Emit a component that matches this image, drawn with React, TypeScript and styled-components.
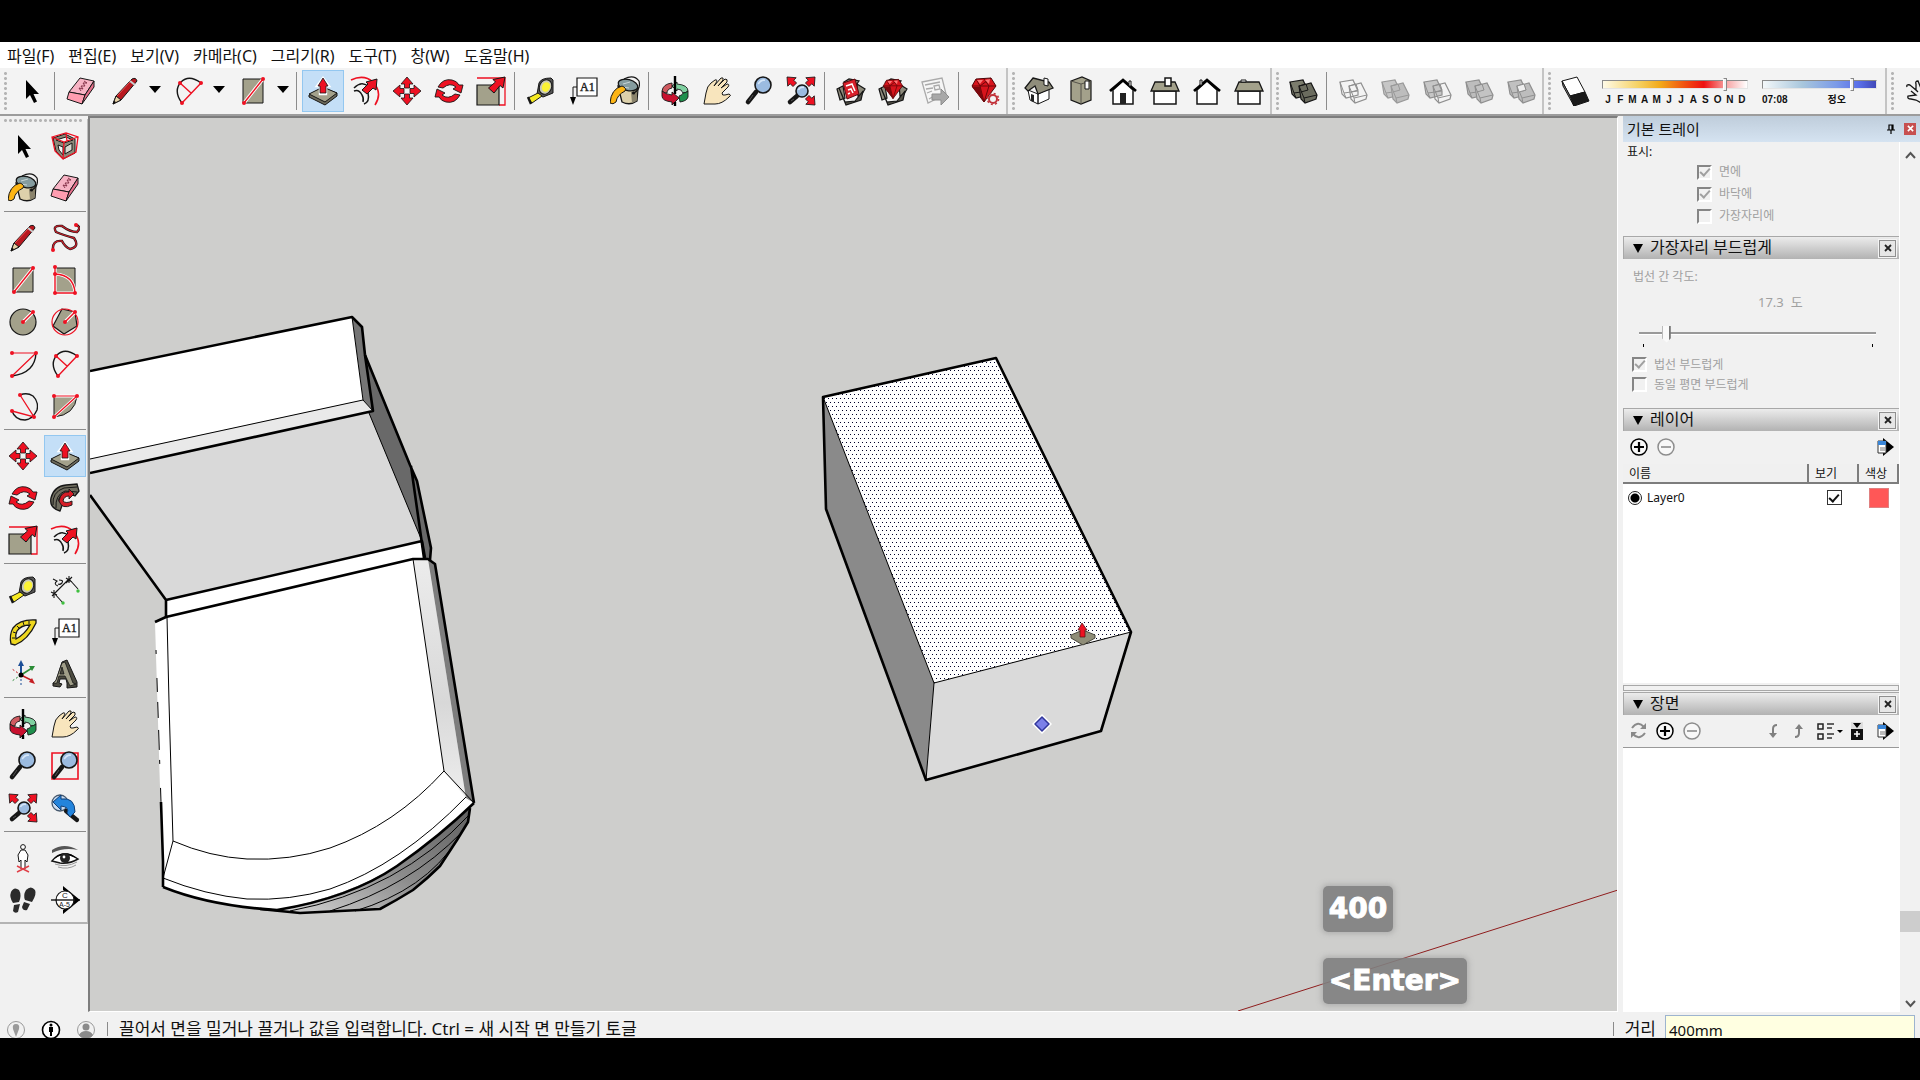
import React from "react";
import styled, { createGlobalStyle, css } from "styled-components";

const FONT = '"Noto Sans", "Noto Sans CJK KR", sans-serif';
const INK = "#161616";
const RED = "#ee1122";
const STONE = "#a3a18b";

const GlobalStyle = createGlobalStyle`
  * { box-sizing: border-box; }
  body { margin: 0; background: #000; font-family: ${FONT}; color: #111; }
  button, input, table { font-family: inherit; color: inherit; }
`;

/* ---------- icon artwork, each drawn on a 30 x 30 grid ---------- */

const arrowHead = (x: number, y: number, deg: number, fill = RED) => (
  <path
    key={`${x}-${y}`}
    transform={`translate(${x} ${y}) rotate(${deg})`}
    d="M0 0L6 7H2.500V11H-2.500V7H-6Z"
    fill={fill}
    stroke={INK}
    strokeWidth="0.8"
  />
);

const lens = (cx: number, cy: number, r: number) => (
  <>
    <path d={`M${cx - r + 1} ${cy + r - 1}L4 26`} stroke={INK} strokeWidth="4.6" strokeLinecap="round" />
    <path d={`M${cx - r - 2} ${cy + r + 2}L5 25`} stroke="#555" strokeWidth="1" />
    <circle cx={cx} cy={cy} r={r} fill="#9bbbe0" stroke={INK} strokeWidth="1.6" />
    <path d={`M${cx - r * 0.6} ${cy - 1}Q${cx - 2} ${cy - r * 0.7} ${cx + 2} ${cy - r * 0.6}`} stroke="#d5e6f8" strokeWidth="1.6" />
  </>
);

const bigRedArrow = (
  <path d="M29 1L27 12L24 9.5L18 17L12.500 12L19.500 6L17 3.500Z" fill={RED} stroke={INK} strokeWidth="1" />
);

const dot = (x: number, y: number) => <circle key={`${x}.${y}`} cx={x} cy={y} r="2" fill={RED} />;

const carton = (
  <>
    <path d="M1 13L7 10L9 22L4 24ZM8 6L13 3L23 5L20 9ZM21 8L29 13L26 18L22 20Z" fill="#8d8a7b" stroke={INK} strokeWidth="1.2" />
    <path d="M3 12L10 29L25 24L27 15L19 25L9 26Z" fill="#56544a" stroke={INK} strokeWidth="1.2" />
  </>
);

const gem = (
  <>
    <path d="M7 4L22 3L27 11L15 27L3 11Z" fill="#d8141c" stroke="#4d0508" strokeWidth="1" />
    <path d="M7 4L11 11L22 3M11 11L3 11M11 11L15 27L20 11L27 11M11 11H20L15 4" stroke="#6d0609" strokeWidth="1" />
    <path d="M15 27L11 12H3Z" fill="#7c080d" />
    <path d="M8 5L14 5L11 9ZM16 5L21 4L20 9Z" fill="#ff7676" />
  </>
);

const solidPair = (a: string, b: string, line: string, wireA = false, wireB = false) => (
  <>
    <path d="M2 6L15 4L20 15V19L8 22L4 18Z" fill={wireA ? "none" : a} stroke={line} strokeWidth="1.2" />
    <path d="M2 6L6 17L20 15M6 17L8 22" stroke={line} />
    <path d="M11 10L23 7L29 19L28 23L17 27L13 23Z" fill={wireB ? "none" : b} stroke={line} strokeWidth="1.2" />
    <path d="M11 10L16 22L29 19M16 22L17 27M11 10L18 8L20 14L13 16" stroke={line} />
  </>
);

const icons: Record<string, React.ReactNode> = {
  select: <path d="M10 4V23L14 19L18 27L21 25.500L17.500 18H23Z" fill="#000" />,
  eraser: (
    <>
      <path d="M14 2L28 5L19 19L3 16Z" fill="#f7b3c4" stroke={INK} />
      <path d="M3 16L19 19L16 28L1 23Z" fill="#ff9db0" stroke={INK} />
      <path d="M28 5V11L16 28L19 19Z" fill="#e5708b" stroke={INK} />
      <path d="M18 5L21 7L17 7L19 10L15 10L17 13L13 12L15 15" stroke="#7c2840" strokeWidth="0.9" />
    </>
  ),
  component: (
    <>
      <path d="M3 7L15 3L25 8L25 22L13 28L6 20Z" fill="#8c8a7a" stroke={INK} />
      <path d="M6 9L16 6L23 9L14 12ZM8 14L13 16L13 24L9 19Z" fill="#f5f5f5" stroke={INK} />
      <path d="M15 16L22 12V19L15 23Z" fill="#d8d8cf" stroke={INK} />
      <path d="M2 6L16 2L28 6L26 21L13 28L5 20ZM2 6L14 11L28 6M14 11L13 28M16 2L17 10" stroke={RED} strokeWidth="1.3" />
    </>
  ),
  bucket: (
    <>
      <path d="M8 10L12 26Q20 30 27 25L28 12Z" fill="#ddd1ab" stroke={INK} strokeWidth="1.3" />
      <path d="M21 16L27.500 13L26.500 25L22 27Z" fill="#8a836c" />
      <ellipse cx="18" cy="9" rx="10" ry="5.500" transform="rotate(14 18 9)" fill="#859c9f" stroke={INK} strokeWidth="1.3" />
      <path d="M13 8L20 6M12 11L19 12" stroke="#c9d6d6" />
      <path d="M14 3Q24 -2 29 5Q31 13 24 17" stroke={INK} strokeWidth="1.2" />
      <circle cx="23.500" cy="17" r="1.600" fill={INK} />
      <path d="M12 10Q1 13 0 27Q3 29 6 26Q7 19 15 15Q17 12 12 10Z" fill="#fdb515" stroke={INK} />
    </>
  ),
  pencil: (
    <>
      <path d="M3 28L6 20L22 3Q26 1 27 5L11 24Z" fill="#b8181f" stroke={INK} />
      <path d="M3 28L6 20L11 24Z" fill="#e8d4a8" stroke={INK} />
      <path d="M3 28L4 25L6 26Z" fill="#000" />
      <path d="M20 5L25 9" stroke="#ccc" strokeWidth="2" />
      <path d="M7 20L20 6" stroke="#f05050" strokeWidth="1" />
    </>
  ),
  freehand: (
    <>
      <path d="M3 27Q2 17 12 18Q15 24 20 26Q30 24 24 15Q13 12 6 9Q2 2 12 3Q20 9 27 9Q32 4 26 2" stroke={INK} strokeWidth="2.4" />
      <path d="M3 27Q2 17 12 18Q15 24 20 26Q30 24 24 15Q13 12 6 9Q2 2 12 3Q20 9 27 9Q32 4 26 2" stroke="#c8202a" strokeWidth="1.3" />
      {dot(3, 27)}
      {dot(26, 2)}
    </>
  ),
  rect: (
    <>
      <path d="M5 3H25V27H5Z" fill={STONE} stroke={INK} />
      <path d="M6 27L25 3" stroke="#fff" strokeWidth="3.4" />
      <path d="M6 27L25 3" stroke={RED} strokeWidth="1.4" />
      {dot(25, 3)}
      {dot(6, 27)}
    </>
  ),
  rotrect: (
    <>
      <path d="M5 3H25V28H5Z" fill={STONE} stroke={INK} />
      <path d="M5 2V28H25Q24 10 5 9" stroke="#fff" strokeWidth="3.2" />
      <path d="M5 2V28H25Q24 10 5 9" stroke={RED} strokeWidth="1.4" />
      {dot(5, 2)}
      {dot(5, 9)}
      {dot(5, 28)}
      {dot(25, 28)}
    </>
  ),
  circle: (
    <>
      <circle cx="15" cy="15" r="13" fill={STONE} stroke={INK} strokeWidth="1.2" />
      <path d="M15 15L25 5" stroke="#fff" strokeWidth="3.6" />
      <path d="M15 15L25 5" stroke={RED} strokeWidth="1.4" />
      {dot(15, 15)}
      {dot(25, 5)}
    </>
  ),
  polygon: (
    <>
      <path d="M12 2L25 5L27 19L14 27L3 19Z" fill={STONE} stroke={INK} strokeWidth="1.2" />
      <circle cx="15" cy="15" r="13" stroke={RED} strokeWidth="1.2" />
      <path d="M15 15L25 5" stroke="#fff" strokeWidth="3.6" />
      <path d="M15 15L25 5" stroke={RED} strokeWidth="1.4" />
      {dot(15, 15)}
      {dot(25, 5)}
    </>
  ),
  arcA: (
    <>
      <path d="M28 4Q27 24 4 27" stroke={INK} strokeWidth="1.4" />
      <path d="M4 4H28L4 27" stroke={RED} strokeWidth="1.2" />
      {dot(4, 4)}
      {dot(28, 4)}
      {dot(4, 27)}
    </>
  ),
  arcB: (
    <>
      <path d="M8 27Q-1 15 7 6Q15 -2 27 7" stroke={INK} strokeWidth="1.4" />
      <path d="M8 27L27 7M6 7L17 17" stroke={RED} strokeWidth="1.4" />
      {dot(6, 7)}
      {dot(27, 7)}
      {dot(8, 27)}
    </>
  ),
  arcC: (
    <>
      <path d="M12 4Q19 1 25 5Q31 11 29 19Q25 28 17 29Q7 29 4 20" stroke={INK} strokeWidth="1.4" />
      <path d="M12 4L26 26L4 20" stroke={RED} strokeWidth="1.3" />
      {dot(12, 4)}
      {dot(26, 26)}
      {dot(4, 20)}
    </>
  ),
  pie: (
    <>
      <path d="M4 5H27Q25 24 4 26Z" fill={STONE} stroke={INK} />
      <path d="M4 5H27L4 26" stroke="#fff" strokeWidth="3" />
      <path d="M4 5H27L4 26" stroke={RED} strokeWidth="1.2" />
      {dot(4, 5)}
      {dot(27, 5)}
      {dot(4, 26)}
    </>
  ),
  move: (
    <>
      {arrowHead(15, 1, 0)}
      {arrowHead(29, 15, 90)}
      {arrowHead(15, 29, 180)}
      {arrowHead(1, 15, 270)}
    </>
  ),
  pushpull: (
    <>
      <path d="M1 19L15 12L29 17V20L17 29L1 21Z" fill="#6d6b5c" stroke={INK} />
      <path d="M1 18L15 11L29 17L17 26Z" fill={STONE} stroke={INK} />
      <path d="M15 2L21 10H18V18H12V10H9Z" fill={RED} stroke="#fff" strokeWidth="2.4" />
      <path d="M15 2L20 10H18V17H12V10H10Z" fill={RED} stroke={INK} strokeWidth="0.8" />
    </>
  ),
  rotate: (
    <>
      <path d="M4 11Q9 2 18 4Q23 5 25 9L29 9L27 17L19 13L22 11Q16 6 9 12Z" fill={RED} stroke={INK} strokeWidth="0.9" />
      <path d="M26 19Q21 28 12 26Q7 25 5 21L1 21L3 13L11 17L8 19Q14 24 21 18Z" fill={RED} stroke={INK} strokeWidth="0.9" />
    </>
  ),
  followme: (
    <>
      <path d="M10 28Q-1 25 1 15Q4 3 16 2L27 1L29 8L25 13Q13 7 9 16Q8 19 13 20Z" fill="#706e60" stroke={INK} strokeWidth="1.3" />
      <path d="M3 22Q2 9 14 5L27 4M6 25Q5 12 15 8L27 9" stroke={INK} />
      <path d="M9 18Q11 8 19 9V6L24 11L19 16V13Q14 13 13 18Q16 21 22 18V22Q12 27 9 18Z" fill="#d41c26" stroke={INK} strokeWidth="0.9" />
    </>
  ),
  scale: (
    <>
      <path d="M1 2H29V29H23" stroke={RED} strokeWidth="1.3" />
      <path d="M1 9H23V29H1Z" fill={STONE} stroke={INK} strokeWidth="1.2" />
      {bigRedArrow}
    </>
  ),
  offset: (
    <>
      <path d="M1 4Q14 -2 23 6Q33 17 25 29" stroke={RED} strokeWidth="1.6" />
      <path d="M4 12Q12 4 19 11M14 28Q20 26 18 17M4 15Q9 13 12 19Q14 22 13 26" stroke={INK} strokeWidth="1.5" />
      <path d="M27 3L26 14L23 12L17 18L12 14L18 8L16 6Z" fill={RED} stroke={INK} />
    </>
  ),
  tape: (
    <>
      <path d="M13 7Q15 2 25 2L27 4V17L17 21L11 18Z" fill="#555" stroke={INK} />
      <ellipse cx="19.500" cy="11" rx="6" ry="7.500" transform="rotate(25 19.500 11)" fill="#c9c9b8" stroke={INK} />
      <ellipse cx="20" cy="11" rx="4" ry="5" transform="rotate(25 20 11)" fill="#fbf235" />
      <path d="M12 17L16 20L6 27L2 22Z" fill="#f5e922" stroke={INK} />
      <path d="M2 21L5 28" stroke={INK} strokeWidth="2.4" />
    </>
  ),
  dimension: (
    <>
      <path d="M4 19L19 4M4 18L13 28M19 4L28 14M1 17L7 20M4 15V23M16 3L22 7M19 1V8M2 21L7 16M16 8L22 2" stroke={INK} strokeWidth="1.1" />
      <path d="M3 4L7 6Q3 9 8 11M9 5Q14 5 12 8Q10 10 8 9" stroke={INK} strokeWidth="1.1" />
      <circle cx="13" cy="28" r="1.700" fill="#3fbf3f" />
      <circle cx="28" cy="16" r="1.700" fill="#3fbf3f" />
    </>
  ),
  protractor: (
    <>
      <path
        d="M28 3Q12 2 5 11Q1 18 3 27L7 28Q20 23 28 6ZM22 8Q13 8 9 14Q7 18 8 22Q17 17 22 8Z"
        fill="#eed71f"
        fillRule="evenodd"
        stroke={INK}
        strokeWidth="1.3"
      />
      <path d="M4 21L7 21M5 15L8 16M9 9L11 11M15 5L16 8M21 4V7" stroke={INK} />
    </>
  ),
  text: (
    <>
      <path d="M9 2H29V20H9Z" fill="#fff" stroke={INK} strokeWidth="1.200" />
      <text x="12" y="15" fontSize="12" fontFamily='"Liberation Serif", serif' fill="#222" stroke="#222" strokeWidth="0.400">A1</text>
      <path d="M9 11H5V22" stroke={INK} />
      <path d="M2 21H8L5 29Z" fill="#000" />
    </>
  ),
  axes: (
    <>
      <path d="M13 16V6" stroke="#1c4f98" strokeWidth="2" />
      <path d="M10 7L13 1L16 7Z" fill="#1c4f98" />
      <path d="M13 16L24 9" stroke="#2b8c37" strokeWidth="1.5" />
      <path d="M27 7L21 7L24 12Z" fill="#2b8c37" />
      <path d="M13 16L23 21" stroke="#c51d22" strokeWidth="1.5" />
      <path d="M27 25L21 23L24 19Z" fill="#c51d22" />
      <path d="M13 16V27" stroke="#1c4f98" strokeDasharray="2 2" />
      <path d="M13 16L4 10" stroke="#c51d22" strokeDasharray="2 2" />
      <path d="M13 16L4 22" stroke="#2b8c37" strokeDasharray="2 2" />
      <circle cx="13" cy="16" r="2.500" fill="#000" />
    </>
  ),
  text3d: (
    <>
      <path d="M12 3L17 1L27 23V28L17 29V24L16 20H10L9 24L12 25L10 28L3 27V24L6 22Z" fill="#4c4b40" stroke={INK} />
      <path d="M12 4L15 3L23 24L26 25L20 27L15 17H9L7 24L3 25L6 21ZM12 8L10 15H14Z" fill="#a09e88" stroke={INK} strokeWidth="0.800" fillRule="evenodd" />
    </>
  ),
  orbit: (
    <>
      <path d="M12 10L17 6V8Q28 9 28 15Q26 17 23 17Q22 13 17 13V15Z" fill="#7fd0a0" stroke={INK} strokeWidth="0.900" />
      <path d="M28 15V21Q27 25 20 26L19 20Q23 19 23 17Q26 17 28 15Z" fill="#1f8f4d" stroke={INK} strokeWidth="0.900" />
      <path d="M12 7Q3 8 2 15Q4 17 7 17Q7 13 12 12Z" fill="#d05a60" stroke={INK} strokeWidth="0.900" />
      <path d="M15 0V18" stroke="#000" strokeWidth="2.400" />
      <path d="M2 15Q4 18 12 19V16L19 22L12 29V26Q2 25 2 20Z" fill="#c8102e" stroke={INK} strokeWidth="0.900" />
      <path d="M15 26V30" stroke="#000" strokeWidth="2.400" />
    </>
  ),
  pan: (
    <path
      d="M2 28L4 17Q5 10 9 7L13 4Q16 3 14 7L12 10L19 2Q22 1 21 4L16 10L23 3Q26 3 25 6L19 12L25 8Q28 8 26 11L20 17Q20 20 23 19L27 18Q30 19 27 21Q20 28 13 28L9 28Z"
      fill="#f8e5bd"
      stroke={INK}
    />
  ),
  zoom: lens(19, 9, 8),
  zoomwin: (
    <>
      <path d="M2 2H28V28H2Z" stroke={RED} strokeWidth="1.600" />
      {lens(19, 9, 8)}
    </>
  ),
  extents: (
    <>
      {lens(16, 15, 6)}
      {arrowHead(1, 1, -45)}
      {arrowHead(29, 1, 45)}
      {arrowHead(29, 29, 135)}
    </>
  ),
  previous: (
    <>
      <circle cx="10" cy="10" r="8" fill="#c9dcf2" stroke="#45586d" strokeWidth="1.300" />
      <path d="M16 18L27 27" stroke={INK} strokeWidth="4.200" strokeLinecap="round" />
      <path d="M3 9L11 2V6Q25 4 25 19L20 24L17 20Q20 14 11 13V17Z" fill="#2384dc" stroke="#123f75" />
    </>
  ),
  figure: (
    <>
      <circle cx="15" cy="4" r="2.400" fill="#fff" stroke={INK} />
      <path d="M13 7H17L20 12L19 19L17 17V26H13V17L11 19L10 12Z" fill="#fff" stroke={INK} />
      <path d="M9 23L21 29M21 23L9 29" stroke="#e04048" strokeWidth="1.500" />
    </>
  ),
  eye: (
    <>
      <path d="M2 7Q14 -1 28 7Q14 4 2 10Z" fill="#555" />
      <path d="M2 18Q12 5 28 16Q20 21 10 20Z" fill="#fff" stroke={INK} strokeWidth="1.500" />
      <path d="M2 18Q12 7 28 16Q14 3 2 18" fill="#000" />
      <circle cx="15" cy="15" r="5" fill="#222" />
      <circle cx="14" cy="14" r="1.400" fill="#fff" />
      <path d="M5 21Q16 25 27 19M8 24Q18 27 26 22" stroke="#999" />
    </>
  ),
  walk: (
    <>
      <path d="M3 7Q6 1 11 5Q14 10 11 17L5 18Q1 12 3 7ZM6 20L12 19L10 27Q7 29 5 26Z" fill="#2b2b2b" />
      <path d="M18 5Q23 0 27 5Q29 9 24 17L17 15Q15 10 18 5ZM16 17L22 19L19 25Q15 26 14 22Z" fill="#2b2b2b" />
    </>
  ),
  section: (
    <>
      <path d="M13 1L30 15L13 29V25L25 15L13 5Z" fill="#000" />
      <circle cx="15" cy="15" r="9" fill="#fff" stroke={INK} strokeWidth="1.200" />
      <path d="M1 15H30" stroke="#000" strokeWidth="1.300" />
      <text x="12" y="13" fontSize="8" fontFamily='"Liberation Sans", sans-serif' fill="#222">C</text>
      <text x="9" y="22" fontSize="7" fontFamily='"Liberation Sans", sans-serif' fill="#222">A-5</text>
    </>
  ),
  warehouse: (
    <>
      {carton}
      <path d="M7 7L19 3L23 18L11 23Z" fill="#d8202a" stroke="#5a0a0e" />
      <path d="M10 10L16 8L19 15M12 14L15 13L17 17M12 18L14 17" stroke="#fff" strokeWidth="1.500" />
    </>
  ),
  extension: (
    <>
      {carton}
      <g transform="translate(3 1) scale(0.8)">{gem}</g>
    </>
  ),
  layout: (
    <>
      <path d="M2 6L22 2L26 18L8 27Z" fill="#f6f6f6" stroke="#aaa" strokeWidth="1.300" />
      <path d="M5 9L20 6M6 13L13 12M7 17L12 15M9 23L14 20M14 10L19 9L20 13L15 14Z" stroke="#aaa" strokeWidth="1.300" />
      <path d="M12 18H21V13L29 21L21 29V24H12Z" fill="#a8a8a8" stroke="#8d8d8d" />
    </>
  ),
  ruby: (
    <>
      <g transform="translate(-1 -1)">{gem}</g>
      <circle cx="23" cy="23" r="4" fill="#f2f2f2" stroke="#c2323a" strokeWidth="2" />
      <circle cx="23" cy="23" r="5.600" stroke="#c2323a" strokeWidth="1.500" strokeDasharray="2 2.400" />
    </>
  ),
  iso: (
    <>
      <path d="M4 14L14 18V28L6 24ZM14 18L25 13V23L14 28Z" fill="#fff" stroke={INK} />
      <path d="M9 2L25 6L29 12L14 18L11 10L4 15L1 12Z" fill="#8f8d7b" stroke={INK} strokeWidth="1.300" />
      <path d="M20 2L24 3V10L20 9Z" fill="#fff" stroke={INK} />
      <path d="M7 18L10 19V26L7 25Z" fill="#222" />
    </>
  ),
  top: (
    <>
      <path d="M5 5L16 1L25 5V24L15 28L5 24Z" fill={STONE} stroke={INK} strokeWidth="1.200" />
      <path d="M5 5L15 8L25 5M15 8V28" stroke="#55534a" />
      <path d="M19 5H23V13H19Z" fill="#fff" stroke={INK} />
    </>
  ),
  front: (
    <>
      <path d="M5 14L15 5L25 14V28H5Z" fill="#fff" stroke={INK} strokeWidth="1.500" />
      <path d="M2 15L15 4L28 15" stroke="#000" strokeWidth="2.800" />
      <path d="M12 17H18V28H12Z" fill="#222" />
      <path d="M21 5H23V10H21Z" fill="#fff" stroke={INK} />
    </>
  ),
  right: (
    <>
      <path d="M4 15H26V28H4Z" fill="#fff" stroke={INK} strokeWidth="1.500" />
      <path d="M5 6H25L29 15H1Z" fill={STONE} stroke={INK} strokeWidth="1.300" />
      <path d="M15 2H21V10H15Z" fill="#fff" stroke={INK} strokeWidth="1.500" />
    </>
  ),
  back: (
    <>
      <path d="M5 14L15 5L25 14V28H5Z" fill="#fff" stroke={INK} strokeWidth="1.500" />
      <path d="M2 15L15 4L28 15" stroke="#000" strokeWidth="2.800" />
      <path d="M8 4H10V9H8Z" fill="#fff" stroke={INK} />
    </>
  ),
  left: (
    <>
      <path d="M4 15H26V28H4Z" fill="#fff" stroke={INK} strokeWidth="1.500" />
      <path d="M5 6H25L29 15H1Z" fill={STONE} stroke={INK} strokeWidth="1.300" />
      <path d="M7 4H12V6H7Z" fill="#fff" stroke={INK} />
    </>
  ),
  outerShell: solidPair("#7b7c6d", "#6b6c5f", INK),
  intersect: solidPair("none", "none", "#8f8f8f", true, true),
  union: solidPair("#c6c6c6", "#bdbdbd", "#999"),
  subtract: solidPair("#c6c6c6", "none", "#8f8f8f", false, true),
  trim: solidPair("#bdbdbd", "#c3c3c3", "#8f8f8f"),
  split: (
    <>
      {solidPair("#c0c0c0", "#bdbdbd", "#8f8f8f")}
      <path d="M11 10L18 8L20 14L13 16Z" fill="#eee" stroke="#8f8f8f" />
    </>
  ),
  shadow: (
    <>
      <path d="M2 5L17 1L25 16L10 20Z" fill="#fff" stroke={INK} />
      <path d="M10 20L25 16L29 25L14 30Z" fill="#1a1a1a" stroke={INK} />
      <path d="M2 5L10 20L14 30L3 10Z" fill="#8a8a8a" stroke={INK} />
    </>
  ),
  handOutline: (
    <path d="M4 11Q3 8 7 9L13 14V8Q12 5 15 5L17 10L19 6L21 10L24 8L26 12L29 11M8 15L13 19L5 20Q4 23 8 23L13 24L20 28H29M13 14L15 16" stroke={INK} strokeWidth="1.300" />
  ),
};

const Svg30 = styled.svg`
  display: block;
  width: 30px;
  height: 30px;
  flex: none;
  fill: none;
`;

const Icon = ({ name }: { name: string }) => (
  <Svg30 viewBox="0 0 30 30" aria-hidden="true">
    {icons[name]}
  </Svg30>
);

/* ---------- frame ---------- */

const Screen = styled.div`
  display: flex;
  flex-direction: column;
  min-height: 100vh;
  padding: 42px 0;
  background: #000;
`;

const Window = styled.div`
  display: flex;
  flex-direction: column;
  flex: 1;
  min-width: 0;
  background: #f1f1f1;
`;

const MenuBar = styled.nav`
  display: flex;
  align-items: center;
  gap: 14px;
  height: 26px;
  padding: 2px 7px 0;
  background: #fff;
`;

const MenuItem = styled.button`
  padding: 0;
  border: 0;
  background: none;
  font-size: 16px;
  line-height: 24px;
  white-space: nowrap;
`;

const Toolbar = styled.div`
  display: flex;
  align-items: center;
  height: 48px;
  overflow: hidden;
  background: #f3f3f3;
  border-bottom: 2px solid #9c9c9c;
`;

const ToolGroup = styled.div<{ $open?: boolean }>`
  display: flex;
  align-items: center;
  flex: none;
  height: 46px;
  border-right: ${(p) => (p.$open ? "0" : "2px solid #c4c4c4")};
`;

const Grip = styled.span`
  flex: none;
  width: 3px;
  height: 40px;
  margin: 0 3px 0 4px;
  background: radial-gradient(circle, #b4b4b4 1px, transparent 2px) 0 0 / 3px 5px;
`;

const GripRow = styled.span`
  display: block;
  height: 3px;
  margin: 3px 3px;
  background: radial-gradient(circle, #b4b4b4 1px, transparent 2px) 0 0 / 5px 3px;
`;

const Divider = styled.span`
  flex: none;
  width: 1px;
  height: 38px;
  margin: 0 5px 0 2px;
  background: #8c8c8c;
`;

const ToolButton = styled.button<{ $active?: boolean }>`
  display: grid;
  place-items: center;
  flex: none;
  width: 42px;
  height: 42px;
  padding: 0;
  border: 1px solid ${(p) => (p.$active ? "#93c7f0" : "transparent")};
  background: ${(p) => (p.$active ? "#c4dff7" : "transparent")};
`;

const SplitTool = styled.div`
  display: flex;
  align-items: center;
  padding-left: 2px;
`;

const CaretButton = styled.button`
  width: 20px;
  height: 40px;
  padding: 0 2px 4px 0;
  border: 0;
  background: none;
  display: grid;
  place-items: center;

  &::before {
    content: "";
    border: 6px solid transparent;
    border-top: 7px solid #000;
    border-bottom: 0;
  }
`;

const sliderBase = css`
  appearance: none;
  display: block;
  width: 100%;
  margin: 0;
  background: none;
`;

const ShadowControl = styled.div<{ $width: number }>`
  display: flex;
  flex-direction: column;
  gap: 3px;
  width: ${(p) => p.$width}px;
  margin: 0 8px 0 6px;
  padding-top: 2px;
  font: 700 10px/12px "Liberation Sans", "Noto Sans CJK KR", sans-serif;
`;

const GradientRange = styled.input<{ $track: string }>`
  ${sliderBase}
  height: 12px;

  &::-webkit-slider-runnable-track {
    height: 9px;
    border: 1px solid #aaa;
    border-color: #8a8a8a #e4e4e4 #e4e4e4 #8a8a8a;
    background: ${(p) => p.$track};
  }
  &::-webkit-slider-thumb {
    appearance: none;
    width: 4px;
    height: 13px;
    margin-top: -3px;
    background: #f2f2f2;
    border: 1px solid #888;
    border-left-color: #fff;
  }
`;

const Months = styled.div`
  display: grid;
  grid-template-columns: repeat(12, 1fr);
  text-align: center;
`;

const Times = styled.div`
  display: flex;
  gap: 40px;
`;

/* ---------- workspace ---------- */

const Workspace = styled.main`
  display: flex;
  flex: 1;
  min-height: 0;
`;

const SideTools = styled.aside`
  flex: none;
  width: 88px;
`;

const Palette = styled.div`
  padding-bottom: 1px;
  border-right: 1px solid #bdbdbd;
  border-bottom: 2px solid #b3b3b3;
`;

const PaletteGroup = styled.div`
  display: grid;
  grid-template-columns: 42px 42px;
  justify-content: start;
  padding-left: 2px;

  & + &::before {
    content: "";
    grid-column: 1 / -1;
    height: 1px;
    margin: 2px 0 5px 2px;
    background: #8c8c8c;
  }
`;

const Viewport = styled.section`
  position: relative;
  flex: 1;
  min-width: 0;
  overflow: hidden;
  background: #cececc;
  border: 2px solid #7d7d7d;
  border-right: 1px solid #fff;
  border-bottom: 1px solid #fff;
`;

const Scene = styled.svg`
  position: absolute;
  inset: 0;
  width: 100%;
  height: 100%;
  fill: none;
  stroke-linejoin: round;
`;

const KeyStack = styled.div`
  position: absolute;
  right: 150px;
  bottom: 7px;
  display: flex;
  flex-direction: column;
  align-items: flex-start;
  gap: 26px;
`;

const KeyCap = styled.kbd`
  padding: 0 6px;
  border-radius: 5px;
  background: rgba(128, 128, 128, 0.9);
  box-shadow: 0 0 5px 2px rgba(150, 150, 150, 0.5);
  color: #fff;
  font: 700 28px/46px "DejaVu Sans", sans-serif;
  -webkit-text-stroke: 1px #fff;
`;

const line = { stroke: "#000", strokeWidth: 1 };
const bold = { stroke: "#000", strokeWidth: 2.6 };

const Model = () => (
  <Scene aria-hidden="true">
    <defs>
      <pattern id="selected" width="4" height="8" patternUnits="userSpaceOnUse">
        <rect width="4" height="8" fill="#fff" />
        <rect x="2" y="2" width="1" height="1" fill="#000028" />
        <rect x="0" y="6" width="1" height="1" fill="#000028" />
      </pattern>
      <linearGradient id="fender" x1="0" y1="0" x2="0" y2="1">
        <stop offset="0" stopColor="#ececec" />
        <stop offset="0.6" stopColor="#d8d8d8" />
        <stop offset="1" stopColor="#ededed" />
      </linearGradient>
      <linearGradient id="bumper" x1="0" y1="1" x2="1" y2="0">
        <stop offset="0" stopColor="#d8d8d8" />
        <stop offset="0.5" stopColor="#8c8c8c" />
        <stop offset="1" stopColor="#606060" />
      </linearGradient>
    </defs>
    <g transform="translate(-90 -118)">
      <path d="M90 473L369 413L422 541L166 600L90 495Z" fill="#d9d9d9" />
      <path d="M365 355L410 465L417 481L431 548L430 560L424 558L422 541L369 413L373 411Z" fill="#696969" />
      <path d="M352 317L362 327L373 411L363 400Z" fill="#757575" />
      <path d="M90 370L352 317L363 400L90 459Z" fill="#fff" />
      <path d="M90 459L363 400L373 411L90 473Z" fill="#e9e9e9" />
      <path d="M166 600L422 541L425 558L166 617Z" fill="#fff" />
      <path d="M155 622L166 617L413 559H428L474 803Q440 836 397 866Q350 895 277 910Q215 907 163 887Z" fill="#fff" />
      <path d="M413 559H428L466 798L444 771Z" fill="url(#fender)" />
      <path d="M428 559L435 564L474 803L466 798Z" fill="#7d7d7d" />
      <path d="M277 910Q350 895 397 866Q440 836 470 808L468 822L457 840L440 866L413 890L380 909L300 913Z" fill="url(#bumper)" />
      <g {...line}>
        <path d="M352 317L363 400L90 459M363 400L373 411M369 413L422 541" />
        <path d="M167 617L169 702L173 841L163 878M413 559L444 771L474 803" />
        <path d="M173 841Q210 857 247 859Q290 861 330 848Q395 825 444 771" />
        <path d="M163 878Q205 895 247 899Q290 901 330 889Q400 865 466 797" />
        <path d="M290 911Q400 890 469 815M330 911Q410 886 462 832M355 911Q425 890 457 840" />
        <path d="M156 650L161 802" strokeDasharray="4 24 14 10 16 12 20 10" />
      </g>
      <g {...bold}>
        <path d="M90 371L352 317L362 327L365 355L373 411L90 473" />
        <path d="M365 355L410 465L417 481L431 548L430 560M411 466L424 558" />
        <path d="M90 495L166 600V617L413 559H428L435 564L474 803" />
        <path d="M166 600L422 541L425 558M166 617L155 622" />
        <path d="M163 887V862L161 802" />
        <path d="M163 887Q210 906 277 910Q350 898 397 866Q440 836 474 803" />
        <path d="M260 909L300 913L380 909Q397 900 413 890Q428 878 440 866L457 840L468 822L470 808" />
      </g>
      <path d="M823 397L996 358L1131 632L934 683Z" fill="url(#selected)" />
      <path d="M823 397L934 683L926 780L826 509Z" fill="#8a8a8a" />
      <path d="M934 683L1131 632L1101 731L926 780Z" fill="#dadada" />
      <path d="M823 397L934 683L1131 632M934 683L926 780" {...line} />
      <path d="M823 397L996 358L1131 632L1101 731L926 780L826 509Z" {...bold} />
      <path d="M1238 1011L1618 890" stroke="#8f1d1d" />
      <path d="M1042 714L1052 724L1042 734L1032 724Z" fill="#fff" />
      <path d="M1042 717L1049 724L1042 731L1035 724Z" fill="#7b80e8" stroke="#31369a" strokeWidth="1.500" />
      <path d="M1071 635L1083 630L1095 635V638L1083 645L1071 638Z" fill="#8f8d78" stroke="#4a493e" />
      <path d="M1082 623L1087 630H1085V637H1080V630H1078Z" fill={RED} stroke="#5a1616" strokeWidth="0.800" />
    </g>
  </Scene>
);

/* ---------- tray ---------- */

const Tray = styled.aside`
  display: flex;
  flex-direction: column;
  flex: none;
  width: 302px;
  padding-left: 5px;
`;

const TrayTitle = styled.header`
  display: flex;
  align-items: center;
  gap: 6px;
  height: 26px;
  padding: 0 4px 1px;
  background: linear-gradient(#bfcddb, #d5e3f1);
  font-size: 15px;

  h2 {
    flex: 1;
    margin: 0;
    font: inherit;
    line-height: 22px;
  }
`;

const PinButton = styled.button`
  display: grid;
  place-items: center;
  width: 14px;
  height: 14px;
  padding: 0;
  border: 0;
  background: none;
`;

const TrayClose = styled(PinButton)`
  width: 12px;
  height: 12px;
  background: #c75050;
`;

const TrayBody = styled.div`
  display: grid;
  grid-template-columns: 1fr 21px;
  flex: 1;
  min-height: 0;
`;

const Panels = styled.div`
  display: flex;
  flex-direction: column;
`;

const ScrollBar = styled.div`
  display: flex;
  flex-direction: column;
  justify-content: space-between;
  align-items: center;
  padding: 3px 0 2px;
  border-left: 1px solid #fff;
`;

const ScrollThumb = styled.div`
  width: 100%;
  height: 21px;
  margin: auto 0 62px;
  background: #cdcdcd;
`;

const ScrollArrow = styled.button`
  padding: 0;
  border: 0;
  background: none;
  height: 16px;
`;

const DisplayOptions = styled.div`
  height: 94px;
  padding: 1px 4px 0;
  font-size: 12px;
  line-height: 18px;
`;

const CheckRow = styled.label<{ $inset?: number }>`
  display: flex;
  align-items: center;
  gap: 7px;
  height: ${(p) => (p.$inset ? 22 : 20)}px;
  padding-left: ${(p) => p.$inset ?? 5}px;
  color: #a0a0a0;
  font-size: 12px;
`;

const CheckList = styled.div`
  display: flex;
  flex-direction: column;
`;

const CheckBox = styled.input<{ $plain?: boolean }>`
  appearance: none;
  display: grid;
  place-items: center;
  width: 15px;
  height: 15px;
  margin: 0;
  border: ${(p) => (p.$plain ? "1px solid #333" : "2px solid")};
  border-color: ${(p) => (p.$plain ? "#333" : "#858585 #fff #fff #858585")};
  background: ${(p) => (p.$plain ? "#fff" : "#f1f1f1")};

  &:checked::before {
    content: "";
    width: 4px;
    height: 8px;
    margin-top: -2px;
    border: solid ${(p) => (p.$plain ? "#111" : "#a0a0a0")};
    border-width: 0 2px 2px 0;
    transform: rotate(42deg);
  }
`;

const SectionHeader = styled.header`
  display: flex;
  align-items: center;
  height: 23px;
  padding: 0 3px 0 9px;
  border-top: 1px solid #a8a8a8;
  border-left: 1px solid #a8a8a8;
  background: linear-gradient(#ececec, #b2b2b2);

  &::before {
    content: "";
    margin-right: 7px;
    border: 5px solid transparent;
    border-top: 9px solid #000;
    border-bottom: 0;
  }
  h3 {
    flex: 1;
    margin: 0;
    padding-bottom: 2px;
    font: 400 16px/20px ${FONT};
  }
`;

const SectionClose = styled.button`
  display: grid;
  place-items: center;
  width: 17px;
  height: 17px;
  padding: 0;
  border: 1px solid #8f8f8f;
  outline: 1px solid #f4f4f4;
  background: #e6e6e6;
`;

const SoftenPanel = styled.div`
  height: 149px;
  padding: 9px 4px 0;
  color: #a0a0a0;
  font-size: 12px;
`;

const AngleLabel = styled.label`
  display: block;
  padding-left: 6px;
  line-height: 18px;
`;

const AngleValue = styled.output`
  display: flex;
  gap: 7px;
  padding: 6px 0 0 131px;
  font-size: 13px;
  line-height: 20px;
`;

const AngleRange = styled.input`
  ${sliderBase}
  width: auto;
  min-width: 237px;
  height: 22px;
  margin: 10px 0 0 12px;

  &::-webkit-slider-runnable-track {
    height: 3px;
    border-top: 2px solid #9a9a9a;
    border-bottom: 1px solid #fff;
  }
  &::-webkit-slider-thumb {
    appearance: none;
    width: 9px;
    height: 17px;
    margin-top: -8px;
    background: linear-gradient(90deg, #bbb 0 1px, #fafafa 1px 7px, #777 7px);
    clip-path: polygon(0 0, 100% 0, 100% 75%, 55% 100%, 0 75%);
  }
`;

const Ticks = styled.div`
  display: flex;
  justify-content: space-between;
  width: 230px;
  height: 3px;
  margin: 0 0 7px 16px;
  border: solid #000;
  border-width: 0 1px;
`;

const PanelTools = styled.div<{ $lined?: boolean }>`
  display: flex;
  align-items: center;
  gap: 9px;
  height: 33px;
  padding: 0 5px 1px 7px;
  border-bottom: ${(p) => (p.$lined ? "1px solid #999" : "0")};

  svg {
    display: block;
    fill: none;
  }
`;

const ToolCluster = styled.div<{ $gap: number }>`
  display: flex;
  align-items: center;
  gap: ${(p) => p.$gap}px;
`;

const Spacer = styled.span`
  flex: 1;
`;

const PanelButton = styled.button`
  padding: 0;
  border: 0;
  background: none;
`;

const LayerList = styled.div`
  height: 219px;
  background: #fff;
`;

const LayerTable = styled.table`
  width: 100%;
  border-collapse: separate;
  border-spacing: 0;
  table-layout: fixed;
  font-size: 12px;

  th {
    height: 20px;
    padding: 1px 6px 0;
    border-right: 2px solid #7d7d7d;
    border-bottom: 2px solid #7d7d7d;
    background: #f0f0f0;
    font-weight: 400;
    line-height: 16px;
    text-align: left;
  }
  td {
    height: 27px;
    padding: 0 5px;
  }
`;

const LayerName = styled.label`
  display: flex;
  align-items: center;
  gap: 5px;
`;

const Radio = styled.input`
  appearance: none;
  width: 14px;
  height: 14px;
  margin: 0;
  border: 1px solid #222;
  border-radius: 50%;
  background: radial-gradient(circle, #000 4px, #fff 5px);
`;

const Centered = styled.div`
  display: grid;
  place-items: center;
`;

const Swatch = styled.button`
  display: block;
  width: 20px;
  height: 20px;
  padding: 0;
  border: 1px solid #e08080;
  background: #ff5757;
`;

const Splitter = styled.div`
  height: 6px;
  margin: 2px 0 1px;
  border: 1px solid #a8a8a8;
`;

const SceneList = styled.div`
  flex: 1;
  background: #fff;
`;

const StatusBar = styled.footer`
  display: flex;
  align-items: flex-start;
  height: 26px;
  padding: 3px 5px 0 6px;
  font-size: 17px;
`;

const StatusButtons = styled.div`
  display: flex;
  gap: 15px;
  height: 23px;
  padding-top: 5px;
  overflow: hidden;
`;

const StatusButton = styled.button`
  width: 20px;
  height: 20px;
  padding: 0;
  border: 0;
  background: none;

  svg {
    display: block;
    fill: none;
  }
`;

const StatusRule = styled.span`
  width: 1px;
  height: 14px;
  margin: 7px 11px 0;
  background: #8a8a8a;
`;

const StatusText = styled.p`
  flex: 1;
  margin: 0;
  padding-top: 5px;
  line-height: 18px;
  white-space: nowrap;
`;

const Measure = styled.label`
  display: flex;
  gap: 9px;
  line-height: 18px;

  span {
    padding-top: 5px;
  }
  input {
    width: 250px;
    height: 23px;
    padding: 5px 3px 0;
    border: 1px solid #9db4cf;
    border-bottom: 0;
    background: #ffffe1;
    font-size: 15px;
    line-height: 17px;
  }
`;

/* ---------- small panel glyphs ---------- */

const CrossGlyph = ({ color = "#222", size = 8 }: { color?: string; size?: number }) => (
  <svg width={size} height={size} viewBox="0 0 8 8" aria-hidden="true">
    <path d="M1 1L7 7M7 1L1 7" stroke={color} strokeWidth="1.800" />
  </svg>
);

const RoundGlyph = ({ plus }: { plus?: boolean }) => (
  <svg width="18" height="18" viewBox="0 0 18 18" aria-hidden="true">
    <circle cx="9" cy="9" r="8" stroke={plus ? "#000" : "#8d8d8d"} strokeWidth="1.500" fill="#f8f8f8" />
    <path d={plus ? "M4 9H14M9 4V14" : "M4 9H14"} stroke={plus ? "#000" : "#8d8d8d"} strokeWidth={plus ? 2.2 : 1.6} />
  </svg>
);

const DetailsGlyph = () => (
  <svg width="17" height="18" viewBox="0 0 17 18" aria-hidden="true">
    <path d="M6 0L17 9L6 18Z" fill="#000" />
    <path d="M1 3H9V15H1Z" fill="#fff" stroke="#333" />
    <path d="M1 3H9V7H1Z" fill="#3a86d8" />
    <path d="M3 10H8M3 12H8" stroke="#777" />
  </svg>
);

const RefreshGlyph = () => (
  <svg width="17" height="17" viewBox="0 0 17 17" aria-hidden="true">
    <path d="M2 6Q8 -2 14 5M15 11Q9 19 3 12" stroke="#8a8a8a" strokeWidth="2" />
    <path d="M16 1V7H10ZM1 16V10H7Z" fill="#8a8a8a" />
  </svg>
);

const MoveGlyph = ({ up }: { up?: boolean }) => (
  <svg width="10" height="14" viewBox="0 0 10 14" aria-hidden="true">
    <path d={up ? "M2 13Q6 13 6 9V4" : "M8 1Q4 1 4 5V10"} stroke="#808080" strokeWidth="2" />
    <path d={up ? "M2 5L6 0L10 5Z" : "M0 9L4 14L8 9Z"} fill="#808080" />
  </svg>
);

const ListGlyph = () => (
  <svg width="26" height="18" viewBox="0 0 26 18" aria-hidden="true">
    <path d="M1 2H6V7H1ZM1 12H6V17H1Z" stroke="#222" strokeWidth="1.500" />
    <path d="M10 2H17M10 6H15M10 12H17M10 16H15" stroke="#333" strokeWidth="1.600" />
    <path d="M20 8H26L23 11Z" fill="#000" />
  </svg>
);

const AddBoxGlyph = () => (
  <svg width="12" height="18" viewBox="0 0 12 18" aria-hidden="true">
    <path d="M0 0H12V8H0Z" fill="#ddd" />
    <path d="M2 1H10L6 6Z" fill="#000" />
    <path d="M0 7H12V18H0Z" fill="#111" />
    <path d="M3 12H9M6 9V15" stroke="#fff" strokeWidth="1.600" />
  </svg>
);

const ChevronGlyph = ({ down }: { down?: boolean }) => (
  <svg width="11" height="8" viewBox="0 0 11 8" aria-hidden="true">
    <path d={down ? "M1 1L5.500 6L10 1" : "M1 7L5.500 2L10 7"} stroke="#555" strokeWidth="2" fill="none" />
  </svg>
);

const PinGlyph = () => (
  <svg width="8" height="10" viewBox="0 0 8 10" aria-hidden="true">
    <path d="M2 1H6V6H2ZM0 6H8M4 6V10M5 1V6" stroke="#000" strokeWidth="1.200" fill="none" />
  </svg>
);

/* ---------- data ---------- */

const menus = ["파일(F)", "편집(E)", "보기(V)", "카메라(C)", "그리기(R)", "도구(T)", "창(W)", "도움말(H)"];

const palette = [
  ["select", "component", "bucket", "eraser"],
  ["pencil", "freehand", "rect", "rotrect", "circle", "polygon", "arcA", "arcB", "arcC", "pie"],
  ["move", "pushpull", "rotate", "followme", "scale", "offset"],
  ["tape", "dimension", "protractor", "text", "axes", "text3d"],
  ["orbit", "pan", "zoom", "zoomwin", "extents", "previous"],
  ["figure", "eye", "walk", "section"],
];

const Tools = ({ names }: { names: string[] }) => (
  <>
    {names.map((name) => (
      <ToolButton key={name} $active={name === "pushpull"} aria-label={name}>
        <Icon name={name} />
      </ToolButton>
    ))}
  </>
);

const Section = ({ title }: { title: string }) => (
  <SectionHeader>
    <h3>{title}</h3>
    <SectionClose aria-label={`${title} 닫기`}>
      <CrossGlyph />
    </SectionClose>
  </SectionHeader>
);

export default function App() {
  return (
    <Screen>
      <GlobalStyle />
      <Window>
        <MenuBar>
          {menus.map((m) => (
            <MenuItem key={m}>{m}</MenuItem>
          ))}
        </MenuBar>
        <Toolbar>
          <ToolGroup>
            <Grip />
            <Tools names={["select"]} />
            <Divider />
            <Tools names={["eraser"]} />
            {["pencil", "arcB", "rect"].map((name) => (
              <SplitTool key={name}>
                <ToolButton aria-label={name}>
                  <Icon name={name} />
                </ToolButton>
                <CaretButton aria-label={`${name} options`} />
              </SplitTool>
            ))}
            <Divider />
            <Tools names={["pushpull", "offset", "move", "rotate", "scale"]} />
            <Divider />
            <Tools names={["tape", "text", "bucket"]} />
            <Divider />
            <Tools names={["orbit", "pan", "zoom", "extents"]} />
            <Divider />
            <Tools names={["warehouse", "extension", "layout"]} />
            <Divider />
            <Tools names={["ruby"]} />
          </ToolGroup>
          <ToolGroup>
            <Grip />
            <Tools names={["iso", "top", "front", "right", "back", "left"]} />
          </ToolGroup>
          <ToolGroup>
            <Grip />
            <Tools names={["outerShell"]} />
            <Divider />
            <Tools names={["intersect", "union", "subtract", "trim", "split"]} />
          </ToolGroup>
          <ToolGroup>
            <Grip />
            <Tools names={["shadow"]} />
            <ShadowControl $width={146}>
              <GradientRange
                type="range"
                aria-label="날짜"
                defaultValue={86}
                $track="linear-gradient(90deg, #fffbe8, #f5d060 25%, #f2a818 40%, #f04a10 58%, #ee1010 70%, #f7a0a0 85%, #fff)"
              />
              <Months>
                {"JFMAMJJASOND".split("").map((m, i) => (
                  <span key={i}>{m}</span>
                ))}
              </Months>
            </ShadowControl>
            <ShadowControl $width={115}>
              <GradientRange
                type="range"
                aria-label="시간"
                defaultValue={80}
                $track="linear-gradient(90deg, #f4f8fa, #a8c6dc 35%, #7b9ae8 65%, #5a6fe8 85%, #4048b8)"
              />
              <Times>
                <span>07:08</span>
                <span>정오</span>
              </Times>
            </ShadowControl>
          </ToolGroup>
          <ToolGroup $open>
            <Grip />
            <Tools names={["handOutline"]} />
          </ToolGroup>
        </Toolbar>

        <Workspace>
          <SideTools>
            <Palette>
              <GripRow />
              {palette.map((names) => (
                <PaletteGroup key={names[0]}>
                  <Tools names={names} />
                </PaletteGroup>
              ))}
            </Palette>
          </SideTools>

          <Viewport>
            <Model />
            <KeyStack>
              <KeyCap>400</KeyCap>
              <KeyCap>&lt;Enter&gt;</KeyCap>
            </KeyStack>
          </Viewport>

          <Tray>
            <TrayTitle>
              <h2>기본 트레이</h2>
              <PinButton aria-label="고정">
                <PinGlyph />
              </PinButton>
              <TrayClose aria-label="닫기">
                <CrossGlyph color="#fff" size={7} />
              </TrayClose>
            </TrayTitle>
            <TrayBody>
              <Panels>
                <DisplayOptions>
                  <div>표시:</div>
                  <CheckList>
                    <CheckRow $inset={70}>
                      <CheckBox type="checkbox" defaultChecked disabled />
                      면에
                    </CheckRow>
                    <CheckRow $inset={70}>
                      <CheckBox type="checkbox" defaultChecked disabled />
                      바닥에
                    </CheckRow>
                    <CheckRow $inset={70}>
                      <CheckBox type="checkbox" disabled />
                      가장자리에
                    </CheckRow>
                  </CheckList>
                </DisplayOptions>

                <Section title="가장자리 부드럽게" />
                <SoftenPanel>
                  <AngleLabel htmlFor="angle">법선 간 각도:</AngleLabel>
                  <AngleValue htmlFor="angle">
                    <span>17.3</span>
                    <span>도</span>
                  </AngleValue>
                  <AngleRange id="angle" type="range" min={0} max={180} defaultValue={18} disabled />
                  <Ticks />
                  <CheckRow>
                    <CheckBox type="checkbox" defaultChecked disabled />
                    법선 부드럽게
                  </CheckRow>
                  <CheckRow>
                    <CheckBox type="checkbox" disabled />
                    동일 평면 부드럽게
                  </CheckRow>
                </SoftenPanel>

                <Section title="레이어" />
                <PanelTools>
                  <PanelButton aria-label="레이어 추가">
                    <RoundGlyph plus />
                  </PanelButton>
                  <PanelButton aria-label="레이어 삭제">
                    <RoundGlyph />
                  </PanelButton>
                  <Spacer />
                  <PanelButton aria-label="세부 정보">
                    <DetailsGlyph />
                  </PanelButton>
                </PanelTools>
                <LayerList>
                  <LayerTable>
                    <colgroup>
                      <col />
                      <col width="50" />
                      <col width="40" />
                    </colgroup>
                    <thead>
                      <tr>
                        <th>이름</th>
                        <th>보기</th>
                        <th>색상</th>
                      </tr>
                    </thead>
                    <tbody>
                      <tr>
                        <td>
                          <LayerName>
                            <Radio type="radio" name="layer" defaultChecked />
                            Layer0
                          </LayerName>
                        </td>
                        <td>
                          <Centered>
                            <CheckBox type="checkbox" defaultChecked $plain aria-label="Layer0 보기" />
                          </Centered>
                        </td>
                        <td>
                          <Centered>
                            <Swatch aria-label="Layer0 색상" />
                          </Centered>
                        </td>
                      </tr>
                    </tbody>
                  </LayerTable>
                </LayerList>
                <Splitter />

                <Section title="장면" />
                <PanelTools $lined>
                  <PanelButton aria-label="장면 업데이트">
                    <RefreshGlyph />
                  </PanelButton>
                  <PanelButton aria-label="장면 추가">
                    <RoundGlyph plus />
                  </PanelButton>
                  <PanelButton aria-label="장면 제거">
                    <RoundGlyph />
                  </PanelButton>
                  <Spacer />
                  <ToolCluster $gap={14}>
                    <PanelButton aria-label="아래로">
                      <MoveGlyph />
                    </PanelButton>
                    <PanelButton aria-label="위로">
                      <MoveGlyph up />
                    </PanelButton>
                    <ToolCluster $gap={8}>
                      <PanelButton aria-label="보기 옵션">
                        <ListGlyph />
                      </PanelButton>
                      <PanelButton aria-label="세부 숨기기">
                        <AddBoxGlyph />
                      </PanelButton>
                    </ToolCluster>
                    <PanelButton aria-label="세부 정보">
                      <DetailsGlyph />
                    </PanelButton>
                  </ToolCluster>
                </PanelTools>
                <SceneList />
              </Panels>
              <ScrollBar>
                <ScrollArrow aria-label="위로 스크롤">
                  <ChevronGlyph />
                </ScrollArrow>
                <ScrollThumb />
                <ScrollArrow aria-label="아래로 스크롤">
                  <ChevronGlyph down />
                </ScrollArrow>
              </ScrollBar>
            </TrayBody>
          </Tray>
        </Workspace>

        <StatusBar>
          <StatusButtons>
            <StatusButton aria-label="위치">
              <svg width="20" height="20" viewBox="0 0 20 20">
                <circle cx="10" cy="10" r="8.500" stroke="#9a9a9a" />
                <path d="M10 17L7 9Q6 4 10 4Q14 4 13 9Z" fill="#9a9a9a" />
              </svg>
            </StatusButton>
            <StatusButton aria-label="제작자">
              <svg width="20" height="20" viewBox="0 0 20 20">
                <circle cx="10" cy="10" r="8.500" stroke="#000" strokeWidth="1.600" fill="#fff" />
                <circle cx="10" cy="5" r="1.500" fill="#000" />
                <path d="M8 7H12V12H11V16H9V12H8Z" fill="#000" />
              </svg>
            </StatusButton>
            <StatusButton aria-label="로그인">
              <svg width="20" height="20" viewBox="0 0 20 20">
                <circle cx="10" cy="10" r="8.500" stroke="#9a9a9a" />
                <circle cx="10" cy="7" r="3.500" fill="#8a8a8a" />
                <path d="M3 15Q5 11 10 11Q15 11 17 15Q14 19 10 18Q6 19 3 15Z" fill="#8a8a8a" />
              </svg>
            </StatusButton>
          </StatusButtons>
          <StatusRule />
          <StatusText>끌어서 면을 밀거나 끌거나 값을 입력합니다. Ctrl = 새 시작 면 만들기 토글</StatusText>
          <StatusRule />
          <Measure>
            <span>거리</span>
            <input type="text" defaultValue="400mm" />
          </Measure>
        </StatusBar>
      </Window>
    </Screen>
  );
}
